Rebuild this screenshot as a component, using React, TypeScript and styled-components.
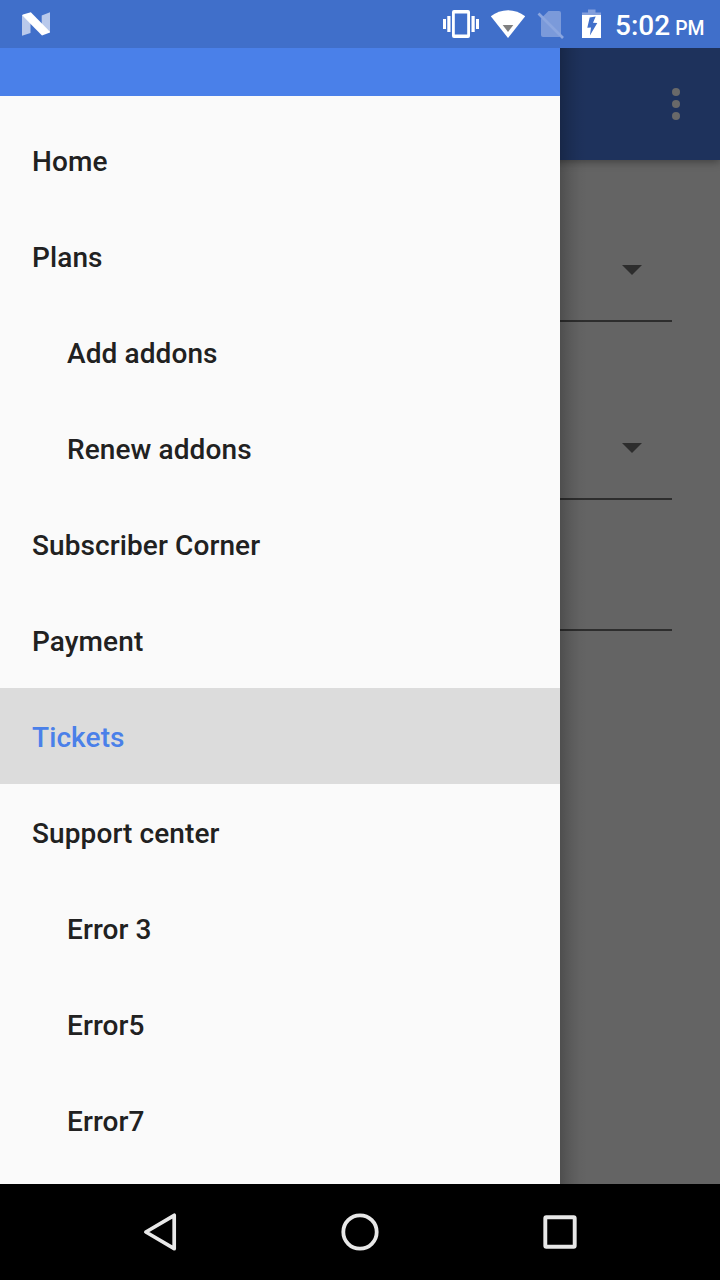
import React from "react";
import styled, { createGlobalStyle } from "styled-components";

const GlobalStyle = createGlobalStyle`
  body { margin: 0; background: #000; }
  *, *::before, *::after { box-sizing: border-box; }
`;

const Screen = styled.div`
  display: flex;
  flex-direction: column;
  width: 720px;
  height: 1280px;
  overflow: hidden;
  font-family: Roboto, "Liberation Sans", sans-serif;
`;

const StatusBar = styled.header`
  display: flex;
  align-items: center;
  height: 48px;
  padding: 0 16px 0 20px;
  background: #406fca;
  color: #fff;

  svg { display: block; flex: none; }
`;

const StatusIcons = styled.div`
  display: flex;
  margin-left: auto;
`;

const Clock = styled.div`
  width: 89px;
  margin-left: 12px;
  padding-top: 6px;
  font-size: 28px;
  line-height: 48px;
  font-weight: 500;
  white-space: nowrap;
`;

const Meridiem = styled.span`
  font-size: 19.4px;
  margin-left: 5px;
`;

const Stage = styled.main`
  position: relative;
  height: 1136px;
  overflow: hidden;
  background: #646464;
`;

const AppBar = styled.div`
  display: flex;
  align-items: center;
  justify-content: flex-end;
  height: 112px;
  padding-right: 40px;
  background: #1e325c;
  box-shadow: 0 2px 8px rgba(0, 0, 0, 0.36);
`;

const Form = styled.div`
  display: flex;
  flex-direction: column;
  padding: 0 48px;
`;

const Field = styled.div<{ $height: number }>`
  display: flex;
  justify-content: flex-end;
  align-items: flex-end;
  height: ${(p) => p.$height}px;
  padding: 0 30px 45px 0;
  border-bottom: 2px solid #2d2d2d;
`;

const Drawer = styled.nav`
  position: absolute;
  inset: 0 auto 0 0;
  width: 560px;
  background: #fafafa;

  &::after {
    content: "";
    position: absolute;
    top: 0;
    bottom: 0;
    left: 100%;
    width: 28px;
    background: linear-gradient(to right, rgba(0, 0, 0, 0.22), rgba(0, 0, 0, 0.1) 35%, rgba(0, 0, 0, 0.025) 70%, transparent);
  }
`;

const DrawerHeader = styled.div`
  height: 48px;
  background: #4a80e9;
`;

const Menu = styled.ul`
  margin: 0;
  padding: 16px 0 0;
  list-style: none;
`;

const MenuItem = styled.li<{ $nested?: boolean; $selected?: boolean }>`
  height: 96px;
  padding-left: ${(p) => (p.$nested ? 67 : 32)}px;
  font-size: 28px;
  font-weight: 500;
  letter-spacing: 0.1px;
  line-height: 100px;
  color: ${(p) => (p.$selected ? "#4a80e9" : "#212121")};
  background: ${(p) => (p.$selected ? "#dcdcdc" : "transparent")};
`;

const SystemNav = styled.footer`
  display: flex;
  justify-content: center;
  align-items: center;
  gap: 152px;
  height: 96px;
  background: #000;

  svg { display: block; }
`;

const items = [
  { label: "Home" },
  { label: "Plans" },
  { label: "Add addons", nested: true },
  { label: "Renew addons", nested: true },
  { label: "Subscriber Corner" },
  { label: "Payment" },
  { label: "Tickets", selected: true },
  { label: "Support center" },
  { label: "Error 3", nested: true },
  { label: "Error5", nested: true },
  { label: "Error7", nested: true },
];

const NougatIcon = () => (
  <svg width="32" height="48" viewBox="20 0 32 48">
    <path d="M22 15L30.5 23v10L22 35.7zM41.7 15.5L50 12.3v20L41.7 25z" fill="#b9c9eb" />
    <path d="M22 15.2L23 14.6 30.8 12.2 50 31.8v.6L42 35.6z" fill="#fff" />
  </svg>
);

const VibrateIcon = () => (
  <svg width="48" height="48" viewBox="437 0 48 48" fill="#fff">
    <path fillRule="evenodd" d="M454 10h14a2 2 0 0 1 2 2v24a2 2 0 0 1-2 2h-14a2 2 0 0 1-2-2V12a2 2 0 0 1 2-2zm.8 3.4v21.2h12.4V13.4z" />
    <path d="M443 19h3v10h-3zM447.3 16h3.2v16h-3.2zM471.5 16h3.2v16h-3.2zM476 19h3v10h-3z" />
  </svg>
);

const WifiIcon = () => (
  <svg width="48" height="48" viewBox="485 0 48 48">
    <path d="M490.8 16.2C500.8 8.1 515.2 8.1 525.2 16.2L508 38z" fill="#fff" />
    <path d="M502.7 25h10.6L508 32z" fill="#808080" />
  </svg>
);

const NoSimIcon = () => (
  <svg width="42" height="48" viewBox="533 0 42 48">
    <path d="M548.5 11H559a2 2 0 0 1 2 2v22a2 2 0 0 1-2 2h-16a2 2 0 0 1-2-2V18.5z" fill="#7b9ada" />
    <path d="M538.5 13.5L563 38" stroke="#8ba6df" strokeWidth="2.7" />
  </svg>
);

const BatteryIcon = () => (
  <svg width="28" height="48" viewBox="575 0 28 48">
    <path d="M588 9.5h7.5v3h5.5v3h-19v-3h6z" fill="#829edc" />
    <path d="M582 15h19v23h-19z" fill="#fff" />
    <path d="M589.7 17.4l6-.9-2.7 6.3 4.3.1-7.4 12.5 1.1-7.8-3.7.1z" fill="#406fca" />
  </svg>
);

const MoreIcon = () => (
  <svg width="8" height="32" viewBox="0 0 8 32" fill="#696969">
    <circle cx="4" cy="4" r="4" />
    <circle cx="4" cy="16" r="4" />
    <circle cx="4" cy="28" r="4" />
  </svg>
);

const CaretIcon = () => (
  <svg width="20" height="10" viewBox="0 0 20 10">
    <path d="M0 0h20L10 10z" fill="#2d2d2d" />
  </svg>
);

export default function App() {
  return (
    <>
      <GlobalStyle />
      <Screen>
        <StatusBar>
          <NougatIcon />
          <StatusIcons>
            <VibrateIcon />
            <WifiIcon />
            <NoSimIcon />
            <BatteryIcon />
          </StatusIcons>
          <Clock>
            5:02<Meridiem>PM</Meridiem>
          </Clock>
        </StatusBar>
        <Stage>
          <AppBar>
            <MoreIcon />
          </AppBar>
          <Form>
            <Field $height={162}>
              <CaretIcon />
            </Field>
            <Field $height={178}>
              <CaretIcon />
            </Field>
            <Field $height={131} />
          </Form>
          <Drawer>
            <DrawerHeader />
            <Menu>
              {items.map((item) => (
                <MenuItem key={item.label} $nested={item.nested} $selected={item.selected}>
                  {item.label}
                </MenuItem>
              ))}
            </Menu>
          </Drawer>
        </Stage>
        <SystemNav>
          <svg width="48" height="48" viewBox="136 1208 48 48">
            <path d="M174.2 1215.3v33.4L145.9 1232z" fill="none" stroke="#e8e8e8" strokeWidth="3.7" strokeLinejoin="round" />
          </svg>
          <svg width="48" height="48" viewBox="336 1208 48 48">
            <circle cx="360" cy="1232" r="16.7" fill="none" stroke="#e8e8e8" strokeWidth="3.8" />
          </svg>
          <svg width="48" height="48" viewBox="536 1208 48 48">
            <rect x="545.3" y="1217.3" width="29.4" height="29.4" rx="1" fill="none" stroke="#e8e8e8" strokeWidth="3.9" />
          </svg>
        </SystemNav>
      </Screen>
    </>
  );
}
